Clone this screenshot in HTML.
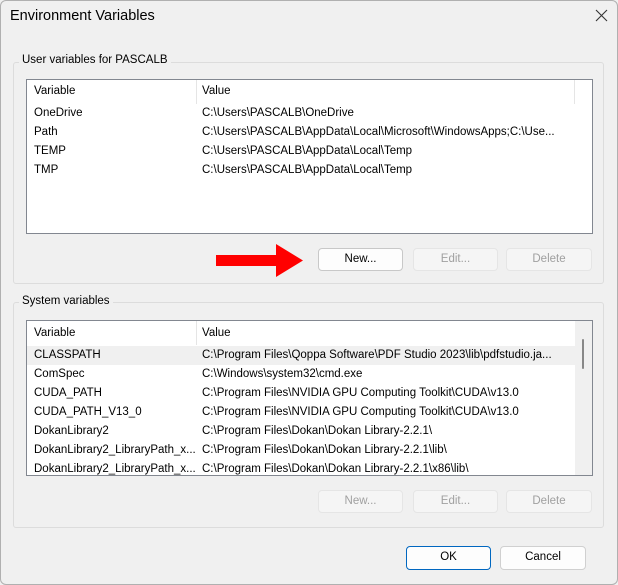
<!DOCTYPE html>
<html><head><meta charset="utf-8"><style>
*{box-sizing:border-box;margin:0;padding:0}
body{width:618px;height:585px;background:#f0f0f0;font-family:"Liberation Sans",sans-serif;font-size:11.5px;color:#000;position:relative;overflow:hidden}
.a{position:absolute}
.title{left:10px;top:8px;font-size:14.5px}
.grp{border:1px solid #dcdcdc;border-radius:3px}
.lbl{background:#f0f0f0;padding:0 3px}
.list{background:#fff;border:1px solid #828790;overflow:hidden}
.t{position:absolute;white-space:nowrap}
.btn{position:absolute;border:1px solid #d0d0d0;border-radius:4px;background:#fdfdfd;text-align:center;line-height:20px;height:23px}
.dis{background:#f5f5f5;border-color:#e5e5e5;color:#a0a0a0}
.div{position:absolute;top:0;height:24px;width:1px;background:#e5e5e5}
</style></head><body>
<div class="a" style="left:0;top:0;width:618px;height:585px;border:1px solid #b0b0b0;border-radius:6px"></div>
<div class="a title">Environment Variables</div>
<svg class="a" style="left:595px;top:9px" width="13" height="13"><path d="M1 1L12 12M12 1L1 12" stroke="#333" stroke-width="1.1"/></svg>

<div class="a grp" style="left:13px;top:62px;width:591px;height:222px"></div>
<div class="a lbl" style="left:19px;top:54px">User variables for PASCALB</div>
<div class="a list" style="left:26px;top:79px;width:567px;height:155px">
<div class="div" style="left:169px"></div><div class="div" style="left:547px"></div>
<div class="t" style="left:7px;top:5px">Variable</div><div class="t" style="left:175px;top:5px">Value</div>
<div class="t" style="left:7px;top:27px">OneDrive</div><div class="t" style="left:175px;top:27px">C:\Users\PASCALB\OneDrive</div>
<div class="t" style="left:7px;top:46px">Path</div><div class="t" style="left:175px;top:46px">C:\Users\PASCALB\AppData\Local\Microsoft\WindowsApps;C:\Use...</div>
<div class="t" style="left:7px;top:65px">TEMP</div><div class="t" style="left:175px;top:65px">C:\Users\PASCALB\AppData\Local\Temp</div>
<div class="t" style="left:7px;top:84px">TMP</div><div class="t" style="left:175px;top:84px">C:\Users\PASCALB\AppData\Local\Temp</div>
</div>
<svg class="a" style="left:216px;top:244px" width="88" height="33"><path d="M0 11H60V0L87 16.5L60 33V22H0Z" fill="#f00"/></svg>
<div class="btn" style="left:318px;top:248px;width:85px;border-color:#c8c8c8">New...</div>
<div class="btn dis" style="left:413px;top:248px;width:85px">Edit...</div>
<div class="btn dis" style="left:506px;top:248px;width:86px">Delete</div>

<div class="a grp" style="left:13px;top:302px;width:591px;height:226px"></div>
<div class="a lbl" style="left:19px;top:295px">System variables</div>
<div class="a list" style="left:26px;top:320px;width:567px;height:156px">
<div class="div" style="left:169px"></div>
<div class="a" style="left:548px;top:0;width:17px;height:156px;background:#f0f0f0"></div>
<div class="a" style="left:555px;top:18px;width:2px;height:30px;background:#888;border-radius:1px"></div>
<div class="a" style="left:0;top:25px;width:548px;height:19px;background:#f0f0f0"></div>
<div class="t" style="left:7px;top:6px">Variable</div><div class="t" style="left:175px;top:6px">Value</div>
<div class="t" style="left:7px;top:28px">CLASSPATH</div><div class="t" style="left:175px;top:28px">C:\Program Files\Qoppa Software\PDF Studio 2023\lib\pdfstudio.ja...</div>
<div class="t" style="left:7px;top:47px">ComSpec</div><div class="t" style="left:175px;top:47px">C:\Windows\system32\cmd.exe</div>
<div class="t" style="left:7px;top:66px">CUDA_PATH</div><div class="t" style="left:175px;top:66px">C:\Program Files\NVIDIA GPU Computing Toolkit\CUDA\v13.0</div>
<div class="t" style="left:7px;top:85px">CUDA_PATH_V13_0</div><div class="t" style="left:175px;top:85px">C:\Program Files\NVIDIA GPU Computing Toolkit\CUDA\v13.0</div>
<div class="t" style="left:7px;top:104px">DokanLibrary2</div><div class="t" style="left:175px;top:104px">C:\Program Files\Dokan\Dokan Library-2.2.1\</div>
<div class="t" style="left:7px;top:123px">DokanLibrary2_LibraryPath_x...</div><div class="t" style="left:175px;top:123px">C:\Program Files\Dokan\Dokan Library-2.2.1\lib\</div>
<div class="t" style="left:7px;top:142px">DokanLibrary2_LibraryPath_x...</div><div class="t" style="left:175px;top:142px">C:\Program Files\Dokan\Dokan Library-2.2.1\x86\lib\</div>
</div>
<div class="btn dis" style="left:318px;top:490px;width:85px">New...</div>
<div class="btn dis" style="left:413px;top:490px;width:85px">Edit...</div>
<div class="btn dis" style="left:506px;top:490px;width:86px">Delete</div>

<div class="btn" style="left:406px;top:546px;width:85px;height:24px;border:1.5px solid #0067c0;line-height:21px">OK</div>
<div class="btn" style="left:500px;top:546px;width:86px;height:24px;line-height:21px">Cancel</div>
</body></html>
